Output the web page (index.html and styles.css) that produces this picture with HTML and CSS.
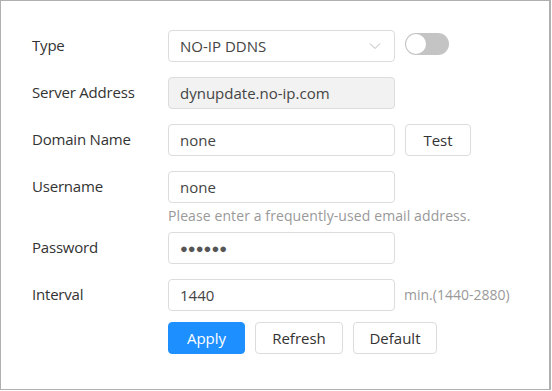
FILE: index.html
```html
<!DOCTYPE html>
<html>
<head>
<title>DDNS</title>
<link rel="stylesheet" href="styles.css">
</head>
<body>
  <div class="panel">
    <div class="fila">
      <label class="etiqueta">Type</label>
      <div class="control">
        <div class="caja selector">
          <span>NO-IP DDNS</span>
          <svg class="flecha" width="12" height="8" viewBox="0 0 12 8"><path d="M1 1.5 L6 6.5 L11 1.5" fill="none" stroke="#b8b8b8" stroke-width="1"/></svg>
        </div>
      </div>
      <div class="interruptor"><span class="perilla"></span></div>
    </div>

    <div class="fila">
      <label class="etiqueta">Server Address</label>
      <div class="control">
        <div class="caja deshabilitada">dynupdate.no-ip.com</div>
      </div>
    </div>

    <div class="fila">
      <label class="etiqueta">Domain Name</label>
      <div class="control">
        <div class="caja">none</div>
      </div>
      <button class="boton prueba">Test</button>
    </div>

    <div class="fila con-ayuda">
      <label class="etiqueta">Username</label>
      <div class="control">
        <div class="caja">none</div>
        <div class="ayuda">Please enter a frequently-used email address.</div>
      </div>
    </div>

    <div class="fila">
      <label class="etiqueta">Password</label>
      <div class="control">
        <div class="caja puntos">&#9679;&#9679;&#9679;&#9679;&#9679;&#9679;</div>
      </div>
    </div>

    <div class="fila">
      <label class="etiqueta">Interval</label>
      <div class="control">
        <div class="caja">1440</div>
      </div>
      <span class="unidad">min.(1440-2880)</span>
    </div>

    <div class="acciones">
      <button class="boton primario">Apply</button>
      <button class="boton">Refresh</button>
      <button class="boton">Default</button>
    </div>
  </div>
</body>
</html>
```

FILE: styles.css
```css
body {
  margin: 0;
  font-family: "Open Sans", "Noto Sans", sans-serif;
  background-color: #ffffff;
  color: #333333;
}

.panel {
  box-sizing: border-box;
  width: 551px;
  height: 390px;
  border: 1px solid #b0b0b0;
  border-right-width: 2px;
  padding: 29px 0 0 31px;
}

.fila {
  display: flex;
  align-items: flex-start;
  margin-bottom: 15px;
}

.fila.con-ayuda {
  margin-bottom: 6px;
}

.etiqueta {
  width: 136px;
  font-size: 15px;
  line-height: 30px;
  color: #333333;
  letter-spacing: -0.2px;
}

.control {
  width: 227px;
}

.caja {
  box-sizing: border-box;
  height: 32px;
  border: 1px solid #dcdcdc;
  border-radius: 4px;
  padding: 0 11px;
  font-size: 15px;
  line-height: 30px;
  color: #444444;
  background-color: #ffffff;
}

.caja.deshabilitada {
  background-color: #f2f2f2;
}

.selector {
  display: flex;
  justify-content: space-between;
  align-items: center;
}

.flecha {
  margin-right: 2px;
}

.puntos {
  font-size: 13px;
  letter-spacing: 0;
  color: #555555;
}

.ayuda {
  margin-top: 3px;
  font-size: 14px;
  line-height: 20px;
  color: #999999;
  white-space: nowrap;
  letter-spacing: 0.1px;
}

.interruptor {
  position: relative;
  box-sizing: border-box;
  width: 44px;
  height: 22px;
  margin: 3px 0 0 10px;
  border-radius: 11px;
  background-color: #c4c4c4;
}

.perilla {
  position: absolute;
  left: 1px;
  top: 1px;
  box-sizing: border-box;
  width: 20px;
  height: 20px;
  border-radius: 50%;
  background-color: #ffffff;
}

.unidad {
  margin-left: 9px;
  font-size: 14px;
  line-height: 32px;
  color: #999999;
}

.boton {
  box-sizing: border-box;
  height: 32px;
  padding: 0 15px;
  border: 1px solid #dcdcdc;
  border-radius: 4px;
  background-color: #ffffff;
  font-family: "Open Sans", "Noto Sans", sans-serif;
  font-size: 15px;
  color: #333333;
  cursor: pointer;
}

.prueba {
  width: 66px;
  margin-left: 10px;
}

.acciones {
  display: flex;
  gap: 10px;
  margin-top: -4px;
  padding-left: 136px;
}

.acciones .boton {
  width: 88px;
}

.acciones .boton:first-child {
  width: 77px;
}

.acciones .boton:last-child {
  width: 84px;
}

.primario {
  background-color: #1e8fff;
  border-color: #1e8fff;
  color: #ffffff;
}
```
